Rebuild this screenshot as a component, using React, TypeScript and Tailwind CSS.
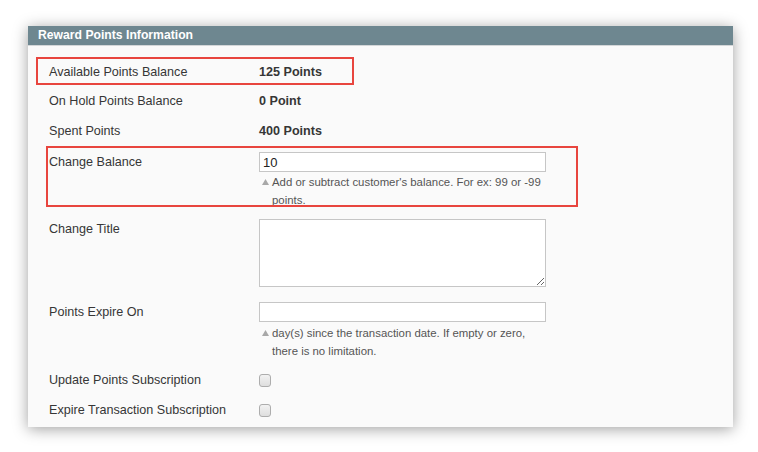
const font = { fontFamily: '"Liberation Sans", Arial, sans-serif' };

const Hint = ({ children }: { children: React.ReactNode }) => (
  <div className="flex w-[287px] text-[11.4px] leading-[18px] text-[#555]">
    <span className="flex h-[18px] w-[13px] shrink-0 items-center pl-[3px]">
      <svg width="7" height="6" viewBox="0 0 7 6">
        <path d="M3.5 0 L7 6 L0 6 Z" fill="#a8a8a8" />
      </svg>
    </span>
    <span>{children}</span>
  </div>
);

const TextInput = ({ value }: { value?: string }) => (
  <input
    type="text"
    defaultValue={value}
    className="block h-[20px] w-[287px] border border-[#c6c6c6] bg-white px-[3px] text-[13px] text-[#222] outline-none"
  />
);

const Checkbox = () => (
  <span className="block h-[13px] w-[12px] rounded-[3px] border border-[#adadad] bg-gradient-to-b from-[#f2f2f2] to-[#dedede]" />
);

const StatRow = ({ label, value, h }: { label: string; value: string; h: string }) => (
  <div className={`flex items-center ${h}`}>
    <div className="w-[210px] shrink-0">{label}</div>
    <div className="font-bold">{value}</div>
  </div>
);

const App = () => {
  return (
    <div className="h-[452px] w-[758px] bg-white pl-[28px] pt-[26px]" style={font}>
      <div className="relative h-[401px] w-[705px] bg-[#fafafa] shadow-[0_2px_14px_rgba(0,0,0,0.38)]">
        {/* Header */}
        <div className="flex h-[20px] items-center border-b border-[#d3d6d8] bg-[#6e8790] pl-[10px] text-[12.2px] font-bold text-white">
          Reward Points Information
        </div>

        {/* Body */}
        <div className="pl-[21px] pt-[11px] text-[12.6px] text-[#363636]">
          <StatRow label="Available Points Balance" value="125 Points" h="h-[30px]" />
          <StatRow label="On Hold Points Balance" value="0 Point" h="h-[29px]" />
          <StatRow label="Spent Points" value="400 Points" h="h-[30px]" />

          {/* Change Balance */}
          <div className="flex pt-[6px]">
            <div className="w-[210px] shrink-0 leading-[20px]">Change Balance</div>
            <div>
              <TextInput value="10" />
              <div className="mt-[1px]">
                <Hint>Add or subtract customer's balance. For ex: 99 or -99 points.</Hint>
              </div>
            </div>
          </div>

          {/* Change Title */}
          <div className="mt-[10px] flex">
            <div className="w-[210px] shrink-0 leading-[20px]">Change Title</div>
            <textarea className="block h-[68px] w-[287px] border border-[#c6c6c6] bg-white outline-none" />
          </div>

          {/* Points Expire On */}
          <div className="mt-[15px] flex">
            <div className="w-[210px] shrink-0 leading-[20px]">Points Expire On</div>
            <div>
              <TextInput />
              <div className="mt-[2px]">
                <Hint>day(s) since the transaction date. If empty or zero, there is no limitation.</Hint>
              </div>
            </div>
          </div>

          {/* Subscriptions */}
          <div className="mt-[5px] flex h-[30px] items-center">
            <div className="w-[210px] shrink-0">Update Points Subscription</div>
            <Checkbox />
          </div>
          <div className="flex h-[30px] items-center">
            <div className="w-[210px] shrink-0">Expire Transaction Subscription</div>
            <Checkbox />
          </div>
        </div>

        {/* Annotation boxes */}
        <div className="absolute left-[8px] top-[31px] h-[28px] w-[318px] border-2 border-[#e8453e]" />
        <div className="absolute left-[18px] top-[120px] h-[61px] w-[532px] border-2 border-[#e8453e]" />
      </div>
    </div>
  );
};

export default App;
